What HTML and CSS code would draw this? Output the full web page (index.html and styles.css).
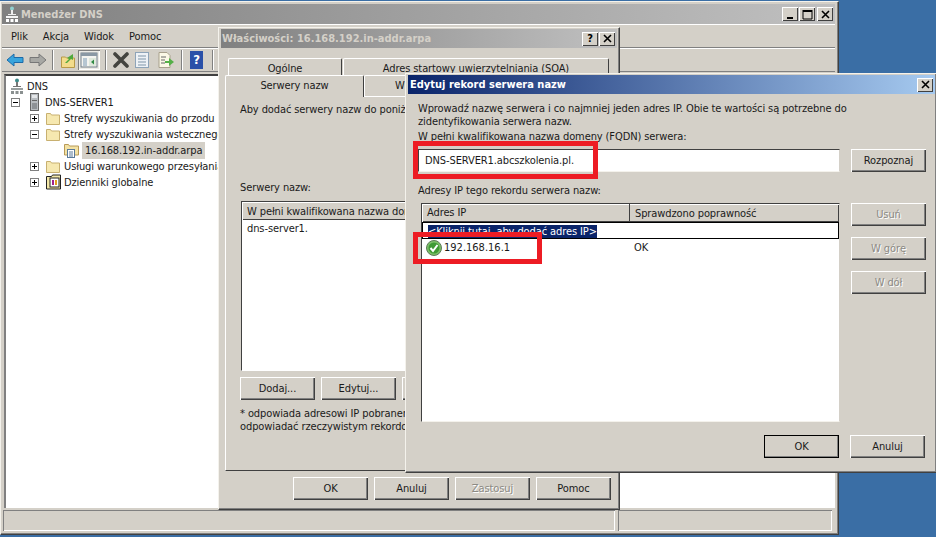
FILE: index.html
```html
<!DOCTYPE html>
<html lang="pl">
<head>
    <meta charset="UTF-8">
    <meta name="viewport" content="width=device-width, initial-scale=1.0">
    <title>Menedżer DNS</title>
    <link rel="stylesheet" href="styles.css">
</head>
<body>

<!-- Main console window -->
<div class="window main-window">
    <div class="titlebar inactive">
        <svg class="title-icon" width="14" height="16" viewBox="0 0 14 16">
            <circle cx="7" cy="2.500" r="2" fill="#8fd0d0"/>
            <rect x="6" y="4" width="2" height="4" fill="#eee"/>
            <rect x="3" y="8" width="8" height="1" fill="#eee"/>
            <rect x="1" y="10" width="12" height="2" fill="#f4f4f4"/>
            <rect x="1" y="13" width="3" height="3" fill="#fff"/>
            <rect x="5.500" y="13" width="3" height="3" fill="#fff"/>
            <rect x="10" y="13" width="3" height="3" fill="#fff"/>
        </svg>
        <span class="title-text">Menedżer DNS</span>
        <div class="caption-buttons">
            <span class="caption-btn"><svg width="11" height="11" viewBox="0 0 11 11"><rect x="2" y="8" width="6" height="2" fill="#000"/></svg></span>
            <span class="caption-btn"><svg width="11" height="11" viewBox="0 0 11 11"><path d="M1 1.500h9M1 1v9h9V1" fill="none" stroke="#000"/><rect x="1" y="1" width="9" height="2" fill="#000"/></svg></span>
            <span class="caption-btn gap-left"><svg width="11" height="11" viewBox="0 0 11 11"><path d="M2 2l7 7M9 2l-7 7" stroke="#000" stroke-width="1.600"/></svg></span>
        </div>
    </div>

    <div class="menubar">
        <span>Plik</span>
        <span>Akcja</span>
        <span>Widok</span>
        <span>Pomoc</span>
    </div>

    <div class="toolbar">
        <svg width="18" height="16" viewBox="0 0 18 16"><path d="M1 8l7-6v3.500h9v5H8V14z" fill="#38a4dc" stroke="#1c6aa8"/></svg>
        <svg width="18" height="16" viewBox="0 0 18 16"><path d="M17 8l-7-6v3.500H1v5h9V14z" fill="#a8a8a4" stroke="#777"/></svg>
        <span class="tool-sep"></span>
        <svg class="space-s" width="14" height="16" viewBox="0 0 14 16"><path d="M.5 5h4l1 1h8v9.500H.5z" fill="#f3dc8c" stroke="#b89a48"/><path d="M4 11l4-4-2-1 6-4v6l-2-1-4 4z" fill="#4fa83c"/></svg>
        <span class="pressed">
            <svg width="18" height="16" viewBox="0 0 18 16"><rect x="1" y="1" width="16" height="14" fill="#f4f4f0" stroke="#6e7c88"/><rect x="1" y="1" width="16" height="3" fill="#8a98a4"/><rect x="3" y="6" width="4" height="8" fill="#b6c6d2"/><rect x="9" y="6" width="7" height="8" fill="#dfe8dc"/><path d="M14 7.500v5l-3-2.500z" fill="#2f8a44"/></svg>
        </span>
        <span class="tool-sep"></span>
        <svg width="18" height="16" viewBox="0 0 18 16"><path d="M3 2l12 12M15 2L3 14" stroke="#44443f" stroke-width="3.600" stroke-linecap="round"/></svg>
        <svg width="14" height="16" viewBox="0 0 14 16"><rect x="0.500" y="0.500" width="13" height="15" fill="#eef2f6" stroke="#8ea4b8"/><path d="M3 4h8M3 7h8M3 10h8M3 13h8" stroke="#7f95a8"/></svg>
        <svg class="space-l" width="16" height="16" viewBox="0 0 16 16"><path d="M1 .5h8l3 3v12H1z" fill="#fbf8e6" stroke="#a8a08c"/><path d="M3 5h5M3 8h4M3 11h4" stroke="#666"/><path d="M7 9h4V6l5 4-5 4v-3H7z" fill="#54b048"/></svg>
        <span class="tool-sep space-s"></span>
        <span class="help-tool space-s">?</span>
        <span class="tool-sep space-l"></span>
    </div>

    <div class="console-body">
        <ul class="tree">
            <li class="level-0">
                <svg class="tree-icon" width="14" height="16" viewBox="0 0 14 16"><circle cx="7" cy="2.500" r="2" fill="#3d8a8a"/><rect x="6" y="4" width="2" height="4" fill="#777"/><rect x="3" y="8" width="8" height="1" fill="#777"/><rect x="1" y="10" width="12" height="2" fill="#9aa0a0"/><rect x="1" y="13" width="3" height="3" fill="#8a9090"/><rect x="5.500" y="13" width="3" height="3" fill="#8a9090"/><rect x="10" y="13" width="3" height="3" fill="#8a9090"/></svg>
                <span>DNS</span>
            </li>
            <li class="level-1">
                <span class="expander minus"></span>
                <svg class="tree-icon server-icon" width="9" height="18" viewBox="0 0 9 18"><rect x="0.500" y="0.500" width="8" height="17" fill="#b8bcc0" stroke="#666"/><rect x="2" y="2" width="5" height="3" fill="#e4e6e8"/><rect x="2" y="7" width="5" height="1" fill="#666"/><rect x="2" y="10" width="5" height="6" fill="#8e9296"/></svg>
                <span>DNS-SERVER1</span>
            </li>
            <li class="level-2">
                <span class="expander plus"></span>
                <svg class="tree-icon" width="14" height="14" viewBox="0 0 14 14"><path d="M.5 2.500h4l1 1.500h8v9.500H.5z" fill="#f6e8b0" stroke="#c8b070"/></svg>
                <span>Strefy wyszukiwania do przodu</span>
            </li>
            <li class="level-2">
                <span class="expander minus"></span>
                <svg class="tree-icon" width="14" height="14" viewBox="0 0 14 14"><path d="M.5 2.500h4l1 1.500h8v9.500H.5z" fill="#f6e8b0" stroke="#c8b070"/></svg>
                <span>Strefy wyszukiwania wstecznego</span>
            </li>
            <li class="level-3">
                <svg class="tree-icon" width="15" height="16" viewBox="0 0 15 16"><path d="M.5 2.500h4l1 1.500h9v9H.5z" fill="#f3e2a4" stroke="#b89a58"/><rect x="3.500" y="7.500" width="7" height="8" fill="#fff" stroke="#5a7a9a"/><path d="M5 10h4M5 12h4M5 14h4" stroke="#5a7a9a"/></svg>
                <span class="selected">16.168.192.in-addr.arpa</span>
            </li>
            <li class="level-2">
                <span class="expander plus"></span>
                <svg class="tree-icon" width="14" height="14" viewBox="0 0 14 14"><path d="M.5 2.500h4l1 1.500h8v9.500H.5z" fill="#f6e8b0" stroke="#c8b070"/></svg>
                <span>Usługi warunkowego przesyłania</span>
            </li>
            <li class="level-2">
                <span class="expander plus"></span>
                <svg class="tree-icon" width="16" height="16" viewBox="0 0 16 16"><path d="M.5 2.500h5l1-1.500h8v14H.5z" fill="#f4e8a8" stroke="#222"/><rect x="4" y="4" width="9" height="9" fill="#fff" stroke="#222"/><rect x="6" y="6" width="2" height="5" fill="#a02090"/><rect x="9" y="6" width="2" height="5" fill="#e0a020"/></svg>
                <span class="tight">Dzienniki globalne</span>
            </li>
        </ul>
    </div>

    <div class="statusbar">
        <span class="status-cell grow"></span>
        <span class="status-cell last"></span>
    </div>
</div>

<!-- Zone properties dialog -->
<div class="window props-dialog">
    <div class="titlebar inactive small">
        <span class="title-text">Właściwości: 16.168.192.in-addr.arpa</span>
        <div class="caption-buttons">
            <span class="caption-btn">?</span>
            <span class="caption-btn"><svg width="11" height="11" viewBox="0 0 11 11"><path d="M2 2l7 7M9 2l-7 7" stroke="#000" stroke-width="1.600"/></svg></span>
        </div>
    </div>

    <div class="tab-row back-row">
        <span class="tab tab-general">Ogólne</span>
        <span class="tab tab-soa">Adres startowy uwierzytelniania (SOA)</span>
    </div>
    <div class="tab-row front-row">
        <span class="tab tab-active">Serwery nazw</span>
        <span class="tab tab-wins">WINS</span>
    </div>

    <div class="tab-panel">
        <p class="panel-intro">Aby dodać serwery nazw do poniższej listy, kliknij przycisk Dodaj.</p>
        <p class="panel-label">Serwery nazw:</p>
        <div class="ns-list">
            <div class="list-header"><span>W pełni kwalifikowana nazwa domeny serwera</span></div>
            <div class="list-row">dns-server1.</div>
        </div>
        <div class="button-row">
            <button class="btn" type="button">Dodaj...</button>
            <button class="btn" type="button">Edytuj...</button>
            <button class="btn" type="button">Usuń</button>
        </div>
        <p class="panel-note">* odpowiada adresowi IP pobranemu w wyniku kwerendy DNS i może nie<br>odpowiadać rzeczywistym rekordom w tej strefie.</p>
    </div>

    <div class="dialog-actions">
        <button class="btn" type="button">OK</button>
        <button class="btn" type="button">Anuluj</button>
        <button class="btn disabled" type="button">Zastosuj</button>
        <button class="btn" type="button">Pomoc</button>
    </div>
</div>

<!-- Name server record dialog -->
<div class="window edit-dialog">
    <div class="titlebar active">
        <span class="title-text">Edytuj rekord serwera nazw</span>
        <div class="caption-buttons">
            <span class="caption-btn"><svg width="11" height="11" viewBox="0 0 11 11"><path d="M2 2l7 7M9 2l-7 7" stroke="#000" stroke-width="1.600"/></svg></span>
        </div>
    </div>

    <div class="edit-body">
        <p class="edit-intro">Wprowadź nazwę serwera i co najmniej jeden adres IP. Obie te wartości są potrzebne do<br>zidentyfikowania serwera nazw.</p>
        <p class="edit-label">W pełni kwalifikowana nazwa domeny (FQDN) serwera:</p>
        <div class="fqdn-row">
            <div class="text-input">DNS-SERVER1.abcszkolenia.pl.</div>
            <button class="btn" type="button">Rozpoznaj</button>
        </div>
        <p class="edit-label ip-label">Adresy IP tego rekordu serwera nazw:</p>
        <div class="ip-row">
            <div class="ip-list">
                <div class="list-header">
                    <span class="col-ip">Adres IP</span>
                    <span class="col-check">Sprawdzono poprawność</span>
                </div>
                <div class="add-row"><span class="add-text">&lt;Kliknij tutaj, aby dodać adres IP&gt;</span></div>
                <div class="ip-item">
                    <span class="col-ip cell-ip">
                        <svg class="ok-icon" width="16" height="16" viewBox="0 0 16 16"><circle cx="8" cy="8" r="7.500" fill="#7cc068" stroke="#5e7a58"/><circle cx="8" cy="8" r="5.500" fill="#3f9a34"/><path d="M4.500 8l2.500 3 4.500-6" fill="none" stroke="#fff" stroke-width="2"/></svg>
                        <span class="ip-value">192.168.16.1</span>
                    </span>
                    <span class="cell-ok">OK</span>
                </div>
            </div>
            <div class="side-buttons">
                <button class="btn disabled" type="button">Usuń</button>
                <button class="btn disabled" type="button">W górę</button>
                <button class="btn disabled" type="button">W dół</button>
            </div>
        </div>
        <div class="edit-actions">
            <button class="btn default" type="button">OK</button>
            <button class="btn" type="button">Anuluj</button>
        </div>
    </div>

    <!-- Red annotations -->
    <div class="mark mark-fqdn"></div>
    <div class="mark mark-ip"></div>
</div>

</body>
</html>
```

FILE: styles.css
```css
body {
    margin: 0;
    height: 537px;
    overflow: hidden;
    background-color: #3a6ea5;
    font-family: 'DejaVu Sans Condensed', 'DejaVu Sans', sans-serif;
    font-stretch: condensed;
    font-size: 11px;
    letter-spacing: -0.1px;
    color: #1a1a1a;
}

p {
    margin: 0;
}

/* Windows */
.window {
    position: absolute;
    box-sizing: border-box;
    background-color: #d4d0c8;
    border: 1px solid;
    border-color: #f4f2ec #404040 #404040 #f4f2ec;
    box-shadow: inset -1px -1px 0 #808080;
}

.main-window {
    left: 0;
    top: 1px;
    width: 839px;
    height: 534px;
    padding: 2px 3px 3px 1px;
    display: flex;
    flex-direction: column;
}

.props-dialog {
    left: 218px;
    top: 27px;
    width: 402px;
    height: 483px;
    padding: 1px 2px;
}

.edit-dialog {
    left: 405px;
    top: 73px;
    width: 531px;
    height: 400px;
    padding: 1px 1px 2px 2px;
    border-right: 0;
}

/* Title bars */
.titlebar {
    display: flex;
    align-items: center;
    height: 20px;
    padding-left: 3px;
    font-weight: bold;
    letter-spacing: 0;
    color: #d4d0c8;
    flex-shrink: 0;
}

.titlebar.inactive {
    background: linear-gradient(to right, #808080, #c0c0c0);
}

.titlebar.small {
    height: 19px;
    padding-left: 1px;
}

.titlebar.active {
    height: 19px;
    padding-left: 2px;
    color: #fff;
    background: linear-gradient(to right, #0a246a, #a6caf0);
}

.title-text {
    flex: 1;
    white-space: nowrap;
}

.title-icon {
    margin-right: 2px;
}

.caption-buttons {
    display: flex;
    gap: 1px;
    padding-right: 2px;
}

.caption-btn {
    width: 16px;
    height: 14px;
    display: flex;
    align-items: center;
    justify-content: center;
    background-color: #d4d0c8;
    color: #000;
    box-shadow: inset 1px 1px 0 #fff, inset -1px -1px 0 #404040;
}

.caption-btn.gap-left {
    margin-left: 1px;
}

/* Menu and toolbar */
.menubar {
    display: flex;
    align-items: center;
    gap: 15px;
    height: 24px;
    padding-left: 9px;
    border-top: 1px solid #fff;
    border-bottom: 1px solid #808080;
    box-sizing: border-box;
}

.toolbar {
    display: flex;
    align-items: center;
    height: 24px;
    padding-left: 4px;
    gap: 5px;
    border-top: 1px solid #fff;
    border-bottom: 1px solid #808080;
    box-sizing: border-box;
}

.tool-sep {
    width: 1px;
    height: 20px;
    background-color: #808080;
    border-right: 1px solid #fff;
}

.space-s {
    margin-left: 2px;
}

.space-l {
    margin-left: 4px;
}

.pressed {
    display: flex;
    padding: 2px;
    margin-left: -2px;
    background-color: #ecebe6;
    box-shadow: inset 1px 1px 0 #808080, inset -1px -1px 0 #fff;
}

.help-tool {
    width: 13px;
    height: 18px;
    line-height: 18px;
    text-align: center;
    background-color: #2a50a8;
    color: #fff;
    font-weight: bold;
    font-size: 13px;
}

/* Console tree */
.console-body {
    flex: 1;
    background-color: #fff;
    border-top: 2px solid #404040;
    border-left: 2px solid #808080;
    margin: 2px 0 2px 2px;
}

.tree {
    list-style: none;
    margin: 0;
    padding: 2px 0 0;
}

.tree li {
    display: flex;
    align-items: center;
    height: 16px;
    white-space: nowrap;
}

.tree .level-0 { padding-left: 4px; }
.tree .level-1 { padding-left: 5px; }
.tree .level-2 { padding-left: 24px; }
.tree .level-3 { padding-left: 58px; }

.tree-icon {
    margin-right: 3px;
    flex-shrink: 0;
}

.tree .level-2 .tree-icon {
    margin-right: 4px;
}

.server-icon {
    margin: 0 6px 0 3px;
}

.expander {
    position: relative;
    box-sizing: border-box;
    width: 9px;
    height: 9px;
    margin-right: 7px;
    border: 1px solid #808080;
    background-color: #fff;
    flex-shrink: 0;
}

.expander::before {
    content: "";
    position: absolute;
    left: 1px;
    top: 3px;
    width: 5px;
    height: 1px;
    background-color: #000;
}

.expander.plus::after {
    content: "";
    position: absolute;
    left: 3px;
    top: 1px;
    width: 1px;
    height: 5px;
    background-color: #000;
}

.selected {
    background-color: #d4d0c8;
    padding: 2px 3px;
}

.tight {
    margin-left: -2px;
}

/* Status bar */
.statusbar {
    display: flex;
    height: 21px;
    gap: 3px;
    padding-right: 3px;
    margin-left: 1px;
}

.status-cell {
    box-shadow: inset 1px 1px 0 #808080, inset -1px -1px 0 #fff;
}

.status-cell.grow {
    flex: 1;
}

.status-cell.last {
    width: 214px;
}

/* Tabs */
.tab-row {
    display: flex;
    position: relative;
}

.tab {
    box-sizing: border-box;
    text-align: center;
    background-color: #d4d0c8;
    border-top: 1px solid #fff;
    border-left: 1px solid #fff;
    border-right: 1px solid #404040;
    border-radius: 2px 2px 0 0;
}

.back-row {
    margin: 10px 0 0 7px;
    height: 18px;
}

.back-row .tab {
    height: 18px;
    padding-top: 3px;
}

.tab-general {
    width: 114px;
    margin-right: 1px;
}

.tab-soa {
    width: 266px;
}

.front-row {
    margin: -1px 0 0 4px;
    height: 21px;
}

.front-row .tab {
    height: 21px;
    padding-top: 3px;
}

.tab-active {
    width: 139px;
    position: relative;
    z-index: 1;
    height: 22px !important;
}

.tab-wins {
    width: 240px;
    text-align: left;
    padding-left: 30px;
}

.tab-panel {
    box-sizing: border-box;
    margin-left: 4px;
    width: 387px;
    height: 375px;
    padding: 6px 14px 0;
    background-color: #d4d0c8;
    border-top: 1px solid #fff;
    border-left: 1px solid #fff;
    border-right: 1px solid #404040;
    border-bottom: 1px solid #404040;
}

.panel-intro {
    white-space: nowrap;
    height: 78px;
}

.panel-label {
    height: 20px;
}

.ns-list {
    box-sizing: border-box;
    width: 340px;
    height: 170px;
    margin-left: 1px;
    background-color: #fff;
    border: 1px solid;
    border-color: #404040 #d4d0c8 #fff #404040;
}

.list-header {
    display: flex;
    align-items: center;
    height: 18px;
    box-sizing: border-box;
    background-color: #d4d0c8;
    box-shadow: inset 1px 1px 0 #fff, inset -1px -1px 0 #404040;
    white-space: nowrap;
    overflow: hidden;
}

.ns-list .list-header {
    padding-left: 5px;
}

.list-row {
    padding: 2px 0 0 5px;
}

.button-row {
    display: flex;
    gap: 6px;
    margin-top: 6px;
}

.panel-note {
    margin-top: 7px;
    line-height: 13px;
    white-space: nowrap;
}

.dialog-actions {
    display: flex;
    justify-content: flex-end;
    gap: 6px;
    margin-top: 6px;
    padding-right: 6px;
}

/* Buttons */
.btn {
    box-sizing: border-box;
    width: 75px;
    height: 23px;
    padding: 0;
    border: 0;
    background-color: #d4d0c8;
    font: inherit;
    letter-spacing: inherit;
    color: #1a1a1a;
    flex-shrink: 0;
    box-shadow: inset 1px 1px 0 #fff, inset -1px -1px 0 #404040, inset -2px -2px 0 #808080;
}

.btn.disabled {
    color: #8c8a84;
    text-shadow: 1px 1px 0 #fff;
}

.btn.default {
    outline: 1px solid #000;
    outline-offset: -1px;
}

/* Edit dialog */
.edit-body {
    padding: 8px 0 0 10px;
}

.edit-intro {
    line-height: 13px;
    white-space: nowrap;
}

.edit-label {
    margin-top: 2px;
    line-height: 13px;
}

.ip-label {
    margin-top: 12px;
}

.fqdn-row {
    display: flex;
    gap: 11px;
    margin-top: 6px;
}

.text-input {
    box-sizing: border-box;
    width: 422px;
    height: 23px;
    padding: 4px 0 0 6px;
    background-color: #fff;
    border: 1px solid;
    border-color: #404040 #d4d0c8 #f4f2ec #404040;
}

.ip-row {
    display: flex;
    gap: 11px;
    margin-top: 6px;
    margin-left: 3px;
}

.ip-list {
    box-sizing: border-box;
    width: 419px;
    height: 219px;
    background-color: #fff;
    border: 1px solid;
    border-color: #404040 #d4d0c8 #f4f2ec #404040;
}

.col-ip {
    box-sizing: border-box;
    width: 208px;
    flex-shrink: 0;
}

.ip-list .list-header .col-ip {
    padding-left: 5px;
    height: 18px;
    line-height: 18px;
    border-right: 1px solid #404040;
}

.ip-list .col-check {
    padding-left: 5px;
}

.add-row {
    box-sizing: border-box;
    height: 17px;
    padding: 2px 0 0 5px;
    border: 1px solid #000;
    background-color: #fff;
}

.add-text {
    display: block;
    width: fit-content;
    line-height: 13px;
    background-color: #0a246a;
    color: #fff;
}

.ip-item {
    display: flex;
    align-items: center;
    height: 17px;
}

.cell-ip {
    display: flex;
    align-items: center;
    padding-left: 4px;
}

.ok-icon {
    margin-right: 2px;
}

.ip-value {
    letter-spacing: 0;
}

.cell-ok {
    padding-left: 4px;
}

.side-buttons {
    display: flex;
    flex-direction: column;
    gap: 11px;
}

.edit-actions {
    display: flex;
    justify-content: flex-end;
    gap: 11px;
    margin-top: 13px;
    padding-right: 10px;
}

/* Red annotation frames */
.mark {
    position: absolute;
    box-sizing: border-box;
    border: 5px solid #ed1c24;
}

.mark-fqdn {
    left: 7px;
    top: 67px;
    width: 185px;
    height: 38px;
}

.mark-ip {
    left: 7px;
    top: 158px;
    width: 129px;
    height: 32px;
}
```
